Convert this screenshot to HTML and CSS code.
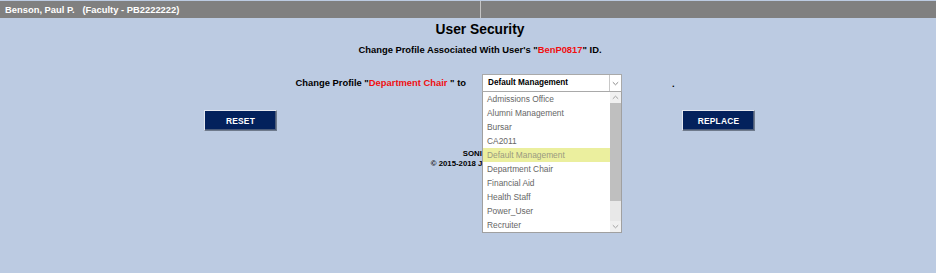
FILE: index.html
```html
<!DOCTYPE html>
<html lang="en">
<head>
<meta charset="utf-8">
<title>User Security</title>
<link rel="stylesheet" href="styles.css">
</head>
<body>
<div class="viewport">
<div class="page">
  <div class="topbar">
    <div class="tb-cell">Benson, Paul P.&nbsp;&nbsp; (Faculty - PB2222222)</div>
    <div class="tb-cell tb-right"></div>
  </div>

  <h1 class="title">User Security</h1>
  <p class="subtitle">Change Profile Associated With User's "<span class="red">BenP0817</span>" ID.</p>

  <div class="change-row">
    <div class="change-label">Change Profile "<span class="red">Department Chair </span>" to</div>
    <div class="change-right">
      <div class="select">
        <span class="select-value">Default Management</span>
        <span class="select-arrow">
          <svg width="7" height="5" viewBox="0 0 7 5"><path d="M0.8 1.2 L3.5 3.8 L6.2 1.2" fill="none" stroke="#8a8a8a" stroke-width="1"/></svg>
        </span>
        <div class="listbox">
          <ul class="options">
            <li>Admissions Office</li>
            <li>Alumni Management</li>
            <li>Bursar</li>
            <li>CA2011</li>
            <li class="hover">Default Management</li>
            <li>Department Chair</li>
            <li>Financial Aid</li>
            <li>Health Staff</li>
            <li>Power_User</li>
            <li>Recruiter</li>
          </ul>
          <div class="scrollbar">
            <div class="sb-btn">
              <svg width="7" height="5" viewBox="0 0 7 5"><path d="M0.8 3.8 L3.5 1.2 L6.2 3.8" fill="none" stroke="#a0a0a0" stroke-width="1"/></svg>
            </div>
            <div class="sb-thumb"></div>
            <div class="sb-track"></div>
            <div class="sb-btn">
              <svg width="7" height="5" viewBox="0 0 7 5"><path d="M0.8 1.2 L3.5 3.8 L6.2 1.2" fill="none" stroke="#a0a0a0" stroke-width="1"/></svg>
            </div>
          </div>
        </div>
      </div>
      <span class="dot">.</span>
    </div>
  </div>

  <div class="button-row">
    <div class="btn-cell btn-left"><button class="btn" type="button">RESET</button></div>
    <div class="btn-cell btn-right"><button class="btn" type="button">REPLACE</button></div>
  </div>

  <div class="footer">
    <div class="footer-line footer-name">SONIS</div>
    <div class="footer-line">© 2015-2018 Jenzabar, Inc.</div>
  </div>
</div>
</div>
</body>
</html>
```

FILE: styles.css
```css
html, body {
  margin: 0;
  padding: 0;
}
body {
  background: #bccbe2;
  font-family: "Liberation Sans", Arial, sans-serif;
  color: #000;
}
.viewport {
  width: 936px;
  height: 273px;
  overflow: hidden;
}
.page {
  width: 960px;
}
.topbar {
  margin-top: 1px;
  display: grid;
  grid-template-columns: 480px 480px;
  height: 17px;
}
.tb-cell {
  background: #808080;
  color: #fff;
  font-weight: bold;
  font-size: 9.4px;
  line-height: 17px;
  padding-left: 5px;
  white-space: nowrap;
}
.tb-right {
  border-left: 1px solid #c4c4c4;
}
.title {
  margin: 4px 0 0;
  font-size: 13.8px;
  line-height: 16px;
  font-weight: bold;
  text-align: center;
}
.subtitle {
  margin: 6px 0 0;
  font-size: 9.4px;
  line-height: 12px;
  font-weight: bold;
  text-align: center;
}
.red {
  color: #f01010;
}
.change-row {
  margin-top: 18px;
  display: grid;
  grid-template-columns: 480px 480px;
  height: 18px;
  position: relative;
  z-index: 2;
}
.change-label {
  text-align: right;
  padding-right: 14px;
  font-size: 9.4px;
  line-height: 18px;
  font-weight: bold;
  white-space: nowrap;
}
.change-right {
  padding-left: 2px;
  display: flex;
  align-items: flex-start;
}
.select {
  position: relative;
  box-sizing: border-box;
  width: 140px;
  height: 18px;
  background: #fff;
  border: 1px solid #a9a9a9;
  display: flex;
}
.select-value {
  flex: 1;
  padding-left: 5px;
  font-size: 8.2px;
  font-weight: bold;
  line-height: 16px;
  white-space: nowrap;
}
.select-arrow {
  width: 11px;
  border-left: 1px solid #c8c8c8;
  display: flex;
  align-items: center;
  justify-content: center;
}
.listbox {
  position: absolute;
  left: -1px;
  top: 17px;
  width: 140px;
  box-sizing: border-box;
  border: 1px solid #a0a0a0;
  border-top: none;
  background: #fff;
  display: flex;
}
.options {
  list-style: none;
  margin: 0;
  padding: 0;
  flex: 1;
}
.options li {
  height: 14px;
  line-height: 14px;
  padding-left: 4px;
  font-size: 8.4px;
  color: #666;
  white-space: nowrap;
}
.options li.hover {
  background: #ebef9e;
  color: #9a9a80;
}
.scrollbar {
  width: 11px;
  display: flex;
  flex-direction: column;
  background: #ebebeb;
}
.sb-btn {
  height: 11px;
  background: #f0f0f0;
  display: flex;
  align-items: center;
  justify-content: center;
}
.sb-thumb {
  height: 98px;
  background: #bfbfbf;
}
.sb-track {
  flex: 1;
  background: #e8e8e8;
}
.dot {
  margin-left: 50px;
  font-size: 9.4px;
  font-weight: bold;
  line-height: 20px;
}
.button-row {
  margin-top: 18px;
  display: grid;
  grid-template-columns: 480px 480px;
}
.btn-left {
  display: flex;
  justify-content: flex-end;
  padding-right: 203px;
}
.btn-right {
  display: flex;
  justify-content: flex-start;
  padding-left: 202px;
}
.btn {
  box-sizing: border-box;
  width: 73px;
  height: 21px;
  margin: 0;
  padding: 0;
  background: #03215c;
  color: #fff;
  font-family: "Liberation Sans", Arial, sans-serif;
  font-size: 8.4px;
  font-weight: bold;
  letter-spacing: 0.2px;
  border: 1px solid;
  border-color: #e4e8f0 #6e7a8c #6e7a8c #e4e8f0;
  box-shadow: inset -1px -1px 0 #4a5a78;
}
.footer {
  margin-top: 18px;
  text-align: center;
  font-size: 7.8px;
  font-weight: bold;
}
.footer-line {
  line-height: 9.5px;
}
.footer-name {
  padding-right: 10px;
}
```
